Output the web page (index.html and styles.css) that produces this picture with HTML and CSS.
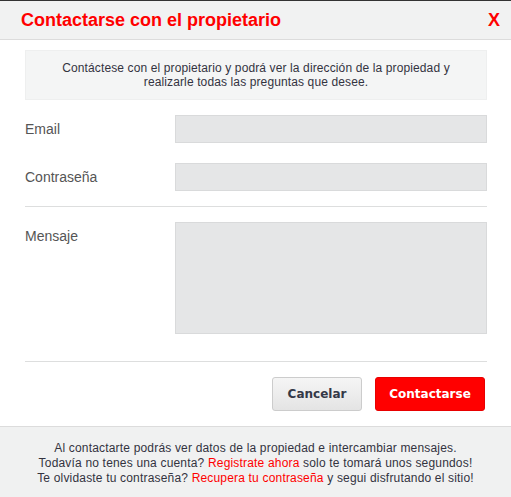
FILE: index.html
```html
<!DOCTYPE html>
<html lang="es">
<head>
<meta charset="utf-8">
<title>Contactarse con el propietario</title>
<link rel="stylesheet" href="styles.css">
</head>
<body>
<div class="dialog">
  <div class="header">
    <h1 class="title">Contactarse con el propietario</h1>
    <span class="close">X</span>
  </div>
  <div class="content">
    <div class="info">Contáctese con el propietario y podrá ver la dirección de la propiedad y<br>realizarle todas las preguntas que desee.</div>
    <div class="row first">
      <label class="label">Email</label>
      <div class="input"></div>
    </div>
    <div class="row">
      <label class="label">Contraseña</label>
      <div class="input"></div>
    </div>
    <div class="divider"></div>
    <div class="row top">
      <label class="label">Mensaje</label>
      <div class="textarea"></div>
    </div>
    <div class="divider lower"></div>
    <div class="actions">
      <button class="btn cancel">Cancelar</button>
      <button class="btn primary">Contactarse</button>
    </div>
  </div>
  <div class="footer">
    <p>Al contactarte podrás ver datos de la propiedad e intercambiar mensajes.</p>
    <p>Todavía no tenes una cuenta? <a class="link">Registrate ahora</a> solo te tomará unos segundos!</p>
    <p>Te olvidaste tu contraseña? <a class="link">Recupera tu contraseña</a> y segui disfrutando el sitio!</p>
  </div>
</div>
</body>
</html>
```
FILE: styles.css
```css
html, body {
  margin: 0;
  padding: 0;
  background: #ffffff;
}
body {
  font-family: "Liberation Sans", Arial, sans-serif;
  color: #333;
}
.dialog {
  width: 511px;
  height: 497px;
  border-top: 1px solid #333;
  box-sizing: border-box;
  display: flex;
  flex-direction: column;
  background: #fff;
}
.header {
  height: 38px;
  background: #f1f2f2;
  border-bottom: 1px solid #dcdcdc;
  display: flex;
  align-items: center;
  justify-content: space-between;
  padding: 0 11px 0 21px;
}
.title {
  margin: 0;
  font-size: 18px;
  font-weight: bold;
  color: #ff0000;
}
.close {
  font-size: 18px;
  font-weight: bold;
  color: #ff0000;
}
.content {
  padding: 10px 24px 0 25px;
}
.info {
  background: #f4f5f5;
  border: 1px solid #eeefef;
  padding: 10px 0;
  text-align: center;
  font-size: 12px;
  line-height: 14px;
  letter-spacing: 0.12px;
  color: #33333f;
}
.row {
  display: flex;
  align-items: center;
  margin-top: 20px;
}
.row.first {
  margin-top: 15px;
}
.row.top {
  align-items: flex-start;
  margin-top: 15px;
}
.label {
  width: 150px;
  flex: none;
  font-size: 14px;
  color: #555;
}
.row.top .label {
  padding-top: 6px;
}
.input, .textarea {
  flex: 1;
  height: 26px;
  background: #e5e6e7;
  border: 1px solid #d9dadb;
}
.textarea {
  height: 110px;
}
.divider {
  height: 1px;
  background: #dddede;
  margin-top: 15px;
}
.divider.lower {
  margin-top: 27px;
}
.actions {
  display: flex;
  justify-content: flex-end;
  gap: 13px;
  padding: 15px 2px 15px 0;
}
.btn {
  height: 34px;
  box-sizing: border-box;
  border-radius: 3px;
  font-family: "DejaVu Sans", Verdana, sans-serif;
  font-weight: bold;
  font-size: 12px;
  padding: 0;
  cursor: pointer;
}
.cancel {
  width: 90px;
  color: #343847;
  background: linear-gradient(#f5f5f5, #e4e4e4);
  border: 1px solid #cccccc;
}
.primary {
  width: 110px;
  color: #ffffff;
  background: #ff0000;
  border: 1px solid #e80000;
}
.footer {
  flex: 1;
  background: #f0f1f1;
  border-top: 1px solid #dcdcdc;
  padding-top: 14px;
  text-align: center;
  font-size: 12px;
  line-height: 15px;
  letter-spacing: 0.18px;
  color: #33333f;
}
.footer p {
  margin: 0;
}
.link {
  color: #ff0000;
}
```
